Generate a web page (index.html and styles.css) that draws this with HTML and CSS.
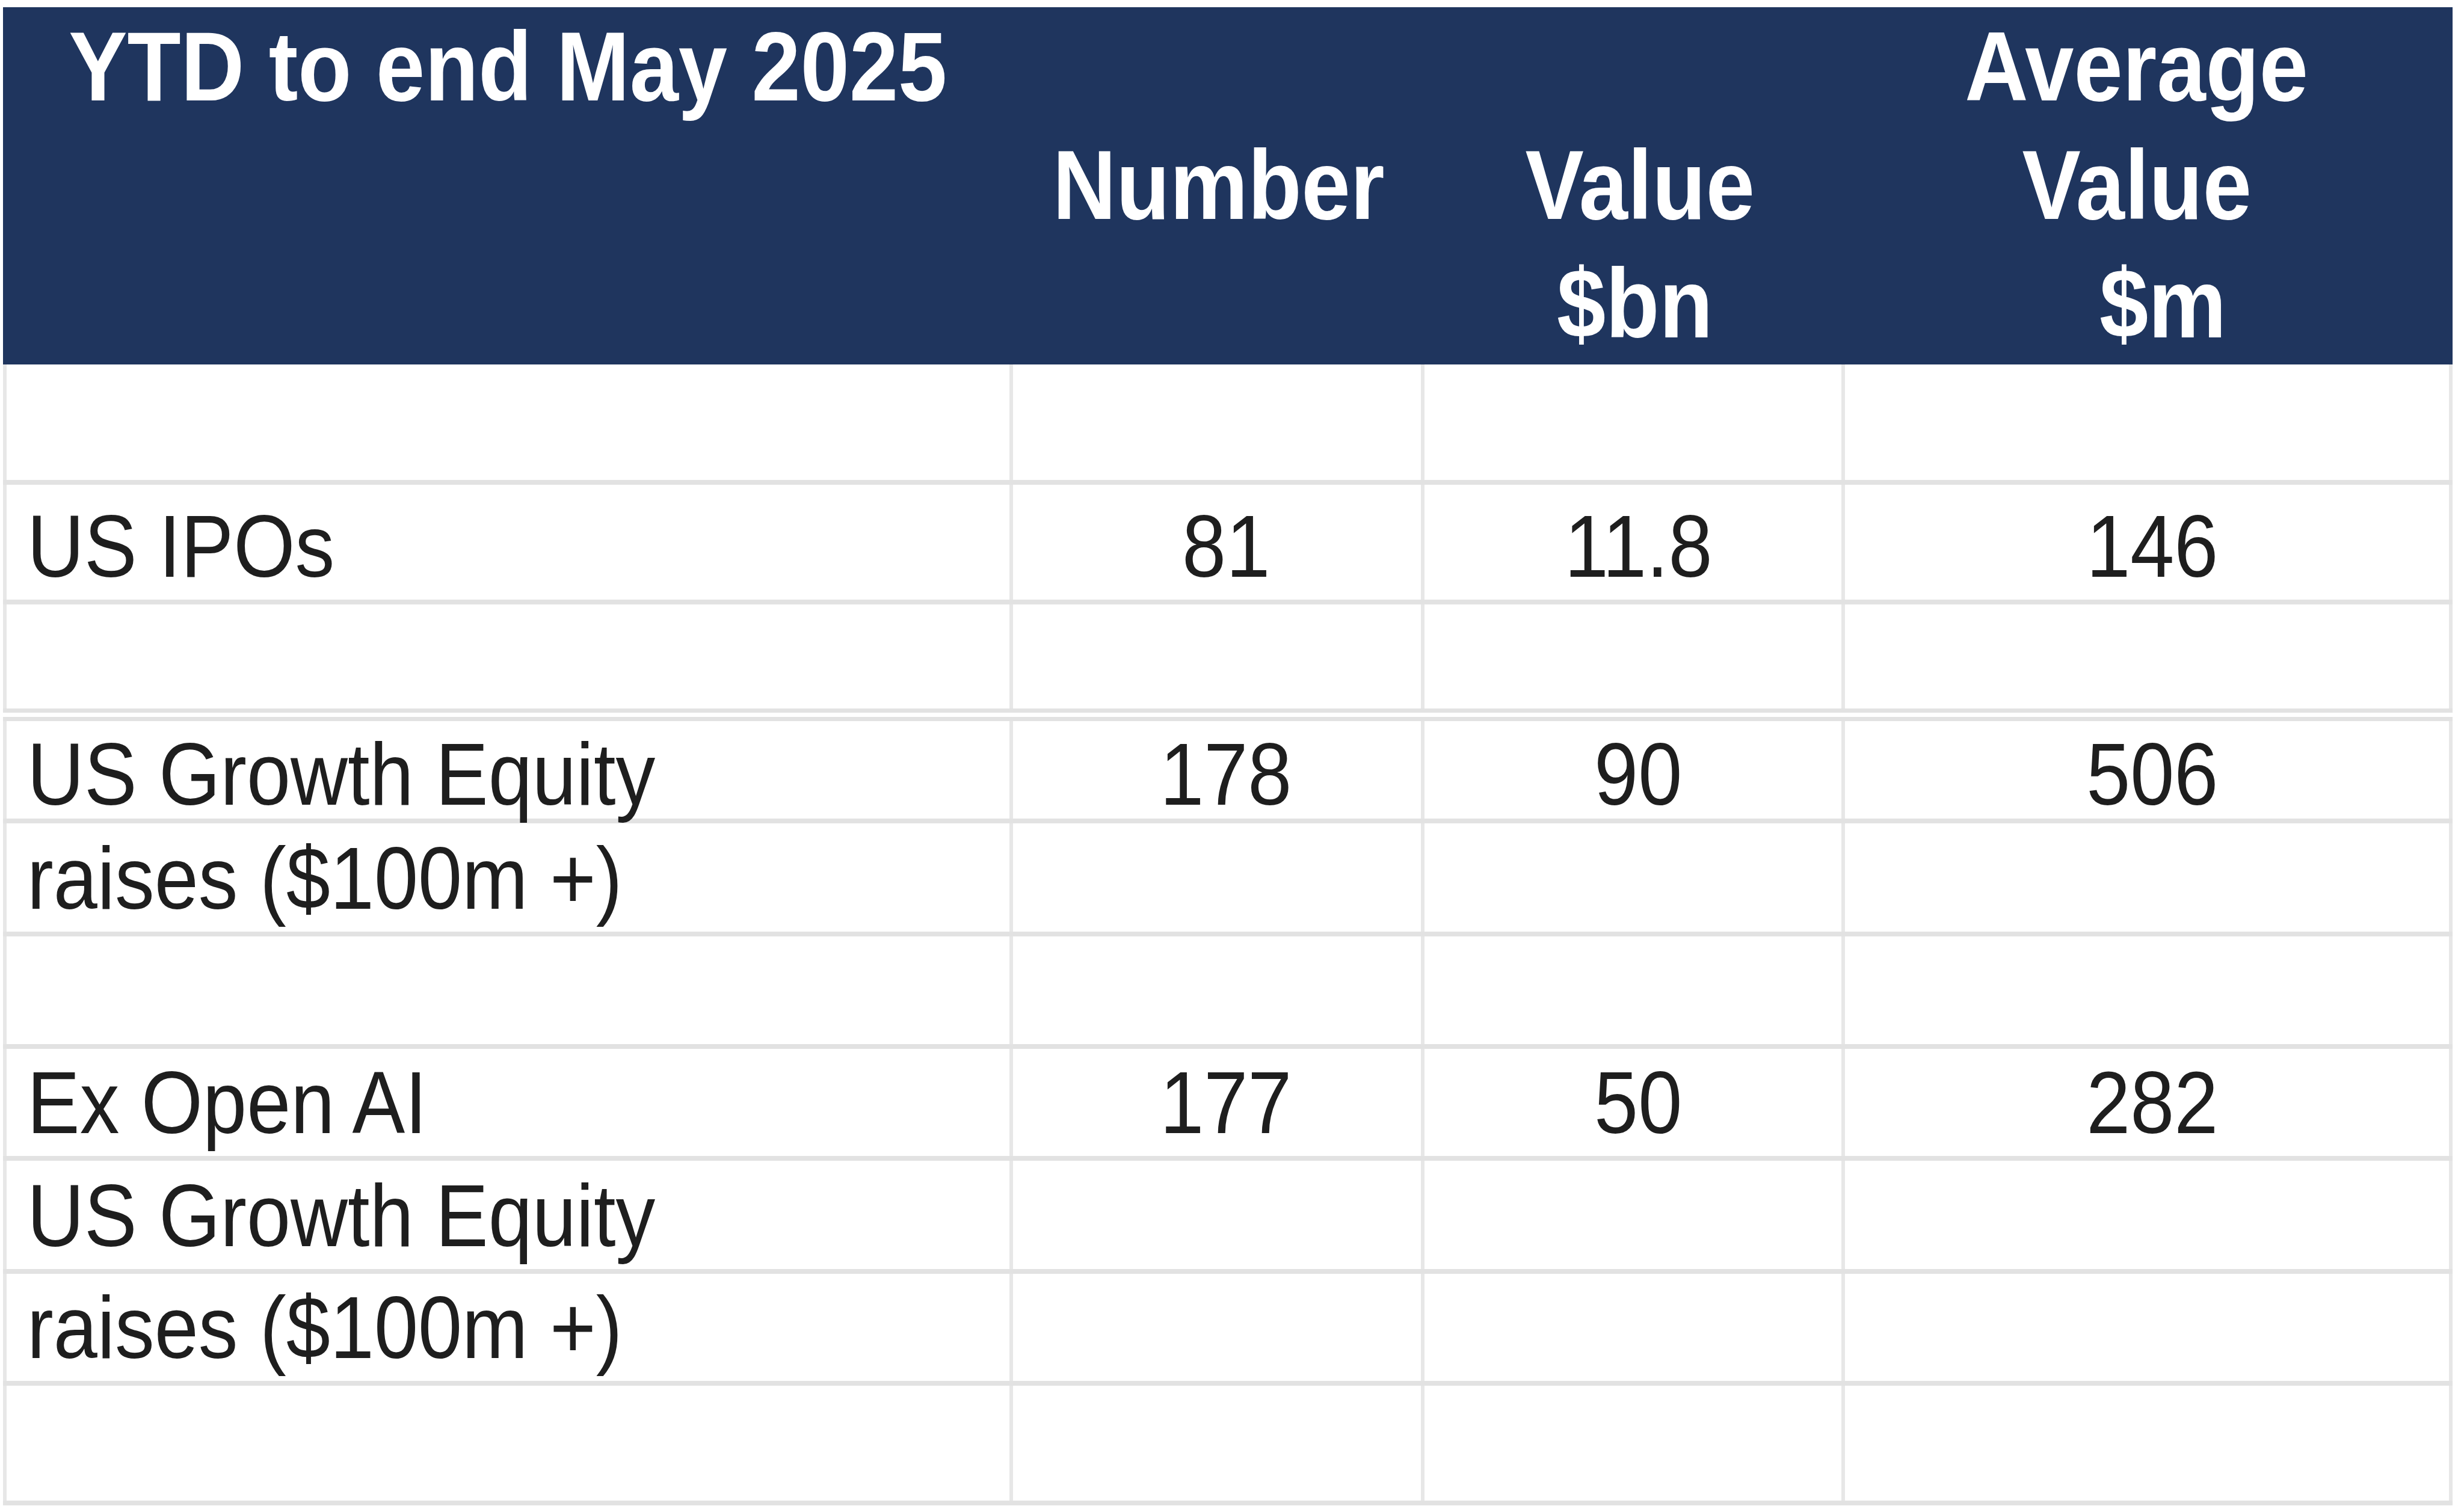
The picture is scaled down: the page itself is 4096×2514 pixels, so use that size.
FILE: index.html
```html
<!DOCTYPE html>
<html lang="en">
<head>
<meta charset="utf-8">
<title>YTD to end May 2025</title>
<link rel="stylesheet" href="styles.css">
</head>
<body>
<div class="sheet">
  <div class="head">
    <div class="hcell">
      <div class="hline"><span class="hx">YTD to end May 2025</span></div>
    </div>
    <div class="hcell hcell-low">
      <div class="hline"><span class="hx">Number</span></div>
    </div>
    <div class="hcell hcell-low">
      <div class="hline"><span class="hx nudge-r1">Value</span></div>
      <div class="hline"><span class="hx">$bn</span></div>
    </div>
    <div class="hcell">
      <div class="hline"><span class="hx nudge-l">Average</span></div>
      <div class="hline"><span class="hx nudge-l">Value</span></div>
      <div class="hline"><span class="hx nudge-r">$m</span></div>
    </div>
  </div>

  <div class="row h200">
    <div class="cell label"></div><div class="cell num n2"></div><div class="cell num"></div><div class="cell num"></div>
  </div>
  <div class="row h199">
    <div class="cell label"><span class="tx">US IPOs</span></div>
    <div class="cell num n2"><span class="tx">81</span></div>
    <div class="cell num"><span class="tx">11.8</span></div>
    <div class="cell num"><span class="tx">146</span></div>
  </div>
  <div class="row h194 dbl">
    <div class="cell label"></div><div class="cell num n2"></div><div class="cell num"></div><div class="cell num"></div>
  </div>
  <div class="row h170 tight">
    <div class="cell label"><span class="tx">US Growth Equity</span></div>
    <div class="cell num n2"><span class="tx">178</span></div>
    <div class="cell num"><span class="tx">90</span></div>
    <div class="cell num"><span class="tx">506</span></div>
  </div>
  <div class="row h188">
    <div class="cell label"><span class="tx">raises ($100m +)</span></div>
    <div class="cell num n2"></div><div class="cell num"></div><div class="cell num"></div>
  </div>
  <div class="row h187">
    <div class="cell label"></div><div class="cell num n2"></div><div class="cell num"></div><div class="cell num"></div>
  </div>
  <div class="row h186">
    <div class="cell label"><span class="tx">Ex Open AI</span></div>
    <div class="cell num n2"><span class="tx">177</span></div>
    <div class="cell num"><span class="tx">50</span></div>
    <div class="cell num"><span class="tx">282</span></div>
  </div>
  <div class="row h188">
    <div class="cell label"><span class="tx">US Growth Equity</span></div>
    <div class="cell num n2"></div><div class="cell num"></div><div class="cell num"></div>
  </div>
  <div class="row h186">
    <div class="cell label"><span class="tx">raises ($100m +)</span></div>
    <div class="cell num n2"></div><div class="cell num"></div><div class="cell num"></div>
  </div>
  <div class="row h199">
    <div class="cell label"></div><div class="cell num n2"></div><div class="cell num"></div><div class="cell num"></div>
  </div>
</div>
</body>
</html>
```

FILE: styles.css
```css
html, body {
  margin: 0;
  padding: 0;
  background: #ffffff;
}

body {
  font-family: "Liberation Sans", Arial, sans-serif;
  color: #1e1e1e;
}

.sheet {
  width: 4072px;
  margin: 12px 0 0 5px;
}

.head {
  display: grid;
  grid-template-columns: 1679px 684px 699px 1010px;
  height: 594px;
  background: #1f355e;
  color: #ffffff;
  font-weight: 700;
  font-size: 164px;
}

.hcell {
  text-align: center;
}

.hcell-low {
  padding-top: 197px;
}

.hline {
  height: 197px;
  line-height: 197px;
  white-space: nowrap;
}

.hx {
  display: inline-block;
  transform: scaleX(0.89);
  transform-origin: center;
}

.nudge-l {
  margin-right: 40px;
}

.nudge-r {
  margin-left: 48px;
}

.nudge-r1 {
  margin-left: 18px;
}

.row {
  display: grid;
  grid-template-columns: 1679px 684px 699px 1010px;
  box-sizing: border-box;
  border-bottom: 8px solid #e2e2e2;
}

.row.dbl {
  border-bottom: 21px double #e2e2e2;
}

.h200 { height: 200px; }
.h199 { height: 199px; }
.h194 { height: 194px; }
.h188 { height: 188px; }
.h187 { height: 187px; }
.h186 { height: 186px; }
.h170 { height: 170px; }

.cell {
  display: flex;
  align-items: flex-end;
  box-sizing: border-box;
  border-right: 6px solid #e7e7e7;
  padding-bottom: 15px;
  font-size: 146px;
  line-height: 146px;
  white-space: nowrap;
}

.tight .cell {
  padding-bottom: 0;
}

.cell.label {
  border-left: 6px solid #e7e7e7;
  padding-left: 34px;
}

.cell.num {
  justify-content: center;
  padding-left: 18px;
}

.cell.num.n2 {
  padding-left: 30px;
}

.tx {
  display: inline-block;
  transform: scaleX(0.9);
  transform-origin: center bottom;
}

.label .tx {
  transform-origin: left bottom;
}
```
